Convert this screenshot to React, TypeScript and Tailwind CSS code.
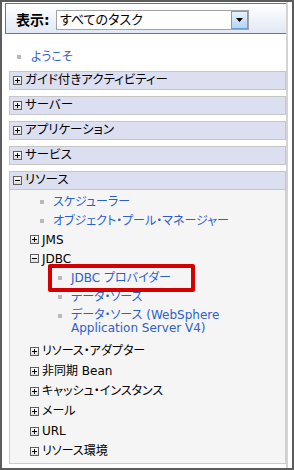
import React from "react";

const LINK = "text-[#2c5fd0]";

function Toggle({ open }: { open?: boolean }) {
  return (
    <svg width="9" height="9" viewBox="0 0 9 9" className="shrink-0">
      <defs>
        <linearGradient id="tg" x1="0" y1="0" x2="0" y2="1">
          <stop offset="0" stopColor="#ffffff" />
          <stop offset="1" stopColor="#d9d9d9" />
        </linearGradient>
      </defs>
      <rect x="0.5" y="0.5" width="8" height="8" fill="url(#tg)" stroke="#5e5e5e" />
      <path d="M2 4.5h5" stroke="#000" />
      {!open && <path d="M4.5 2v5" stroke="#000" />}
    </svg>
  );
}

function Bullet() {
  return <span className="h-[4px] w-[4px] shrink-0 bg-[#b9b9b9]" />;
}

function Section({ label, open }: { label: string; open?: boolean }) {
  return (
    <div className="ml-[7px] flex h-[19px] w-[277px] items-center gap-[3px] border border-[#c6c6c6] bg-[#dcdff0] pl-[3px] text-[12.5px]">
      <Toggle open={open} />
      <span>{label}</span>
    </div>
  );
}

function Folder({ label, open, tall }: { label: string; open?: boolean; tall?: boolean }) {
  return (
    <div className={`flex items-center gap-[3px] pl-[20px] ${tall ? "h-[20px]" : "h-[19px]"}`}>
      <Toggle open={open} />
      <span>{label}</span>
    </div>
  );
}

function Leaf({ label, deep }: { label: string; deep?: boolean }) {
  return (
    <div className={`flex h-[19px] items-center gap-[9px] ${deep ? "pl-[48px]" : "pl-[30px]"}`}>
      <Bullet />
      <span className={LINK}>{label}</span>
    </div>
  );
}

export default function App() {
  return (
    <div className="relative flex h-[470px] w-[294px] overflow-hidden border-2 border-[#5c5c5c] bg-white font-['DejaVu_Sans','Noto_Sans_CJK_JP',sans-serif] text-[12px] text-black [font-feature-settings:'palt']">
      <div className="w-[284px] shrink-0">
        {/* view selector */}
        <div className="ml-[3px] mt-[1px] flex h-[31px] w-[281px] items-center border-y border-l border-[#4a7bc0] bg-gradient-to-b from-white to-[#e1e8f5] pl-[10px] pt-[3px]">
          <span className="w-[40px] text-[14px] font-bold">表示:</span>
          <div className="flex h-[20px] w-[193px] items-stretch border border-[#a3a3a3] bg-white">
            <span className="flex-1 pl-[3px] text-[13px] leading-[18px]">すべてのタスク</span>
            <span className="flex w-[17px] items-center justify-center border border-[#6e9fd5] bg-gradient-to-b from-[#e6f2fd] to-[#b4d5f4]">
              <svg width="7" height="4" viewBox="0 0 7 4">
                <path d="M0 0h7L3.5 4z" fill="#000" />
              </svg>
            </span>
          </div>
        </div>

        <div className="ml-[15px] mt-[13px] flex h-[20px] items-center gap-[10px]">
          <Bullet />
          <span className={LINK}>ようこそ</span>
        </div>

        <div className="mt-[4px] flex flex-col gap-[6px]">
          <Section label="ガイド付きアクティビティー" />
          <Section label="サーバー" />
          <Section label="アプリケーション" />
          <Section label="サービス" />
          <div>
            <Section label="リソース" open />
            <div className="relative ml-[7px] h-[274px] w-[277px] border-x border-b border-[#cccccc] bg-[#f5f5f5] pt-[2px]">
              <Leaf label="スケジューラー" />
              <Leaf label="オブジェクト・プール・マネージャー" />
              <Folder label="JMS" />
              <Folder label="JDBC" open />
              <Leaf label="JDBC プロバイダー" deep />
              <Leaf label="データ・ソース" deep />
              <div className="flex gap-[9px] pb-[6px] pl-[48px] pt-[3px]">
                <span className="mt-[5px] h-[4px] w-[4px] shrink-0 bg-[#b9b9b9]" />
                <span className={`${LINK} leading-[13px]`}>
                  データ・ソース (WebSphere
                  <br />
                  Application Server V4)
                </span>
              </div>
              <Folder label="リソース・アダプター" tall />
              <Folder label="非同期 Bean" tall />
              <Folder label="キャッシュ・インスタンス" tall />
              <Folder label="メール" tall />
              <Folder label="URL" tall />
              <Folder label="リソース環境" tall />

              {/* highlight annotation */}
              <div className="absolute left-[38px] top-[74px] h-[28px] w-[147px] rounded-[2px] border-4 border-[#d40000]" />
            </div>
          </div>
        </div>
      </div>
      <div className="w-[2px] shrink-0 bg-[#d4d4d4]" />
    </div>
  );
}
